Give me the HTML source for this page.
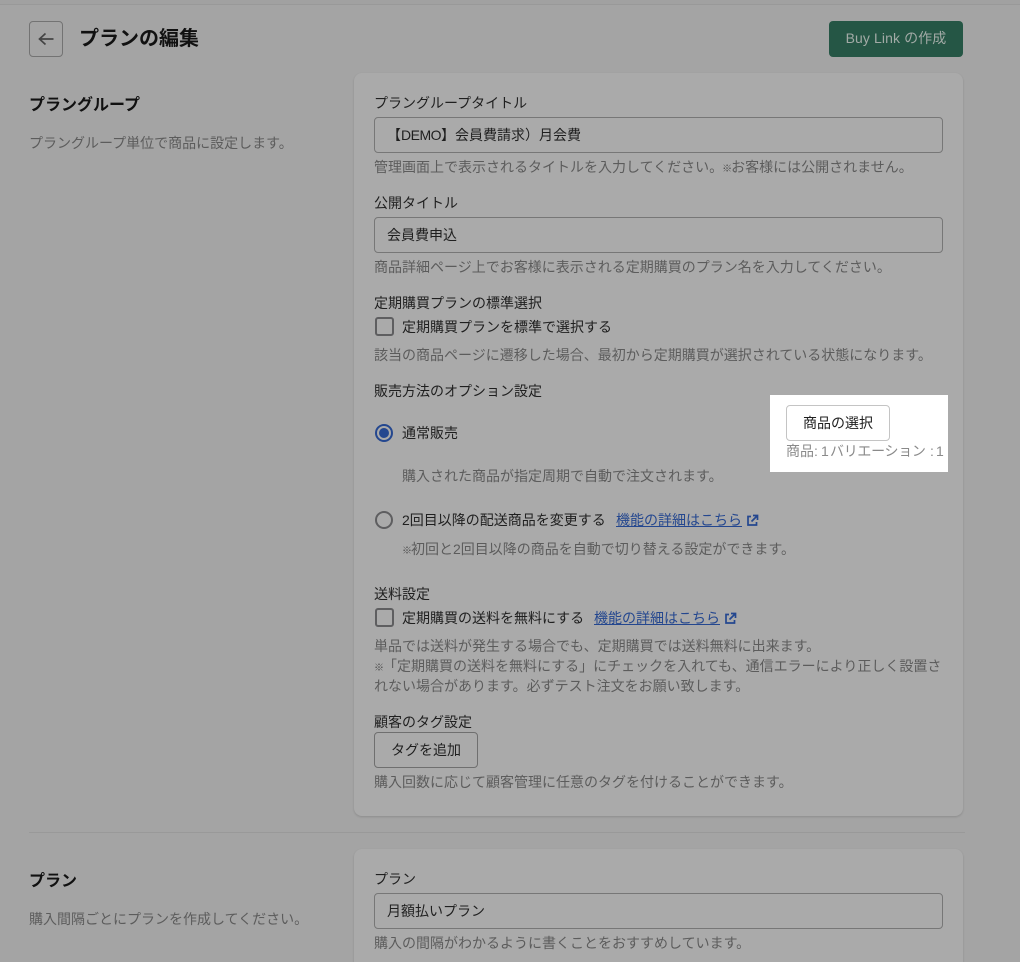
<!DOCTYPE html>
<html lang="ja"><head><meta charset="utf-8"><style>
html,body{margin:0;padding:0;width:1020px;height:962px;overflow:hidden}
body{background:#a4a4a4;font-family:"Liberation Sans","Noto Sans CJK JP",sans-serif;font-size:14px;color:#1c1c1c;text-spacing-trim:space-all}
#w{position:absolute;left:0;top:0;width:1020px;height:962px;overflow:hidden}
.t{position:absolute;white-space:nowrap;line-height:20px;height:20px}
.g{color:#5c5c5c}
.d{color:#1f1f1f}
.k{font-size:10px;letter-spacing:-1px;color:#4a4a4a}
.b{font-weight:700;font-size:16px;color:#111;line-height:24px;height:24px}
.card{position:absolute;left:354px;width:609px;background:#aaa;border-radius:8px;box-shadow:0 1px 2px rgba(0,0,0,.15)}
.inp{position:absolute;left:374px;width:567px;height:34px;border:1px solid #777;border-radius:4px}
.cb{position:absolute;left:375px;width:15px;height:15px;border:2px solid #5e5e60;border-radius:3px}
.rb{position:absolute;left:375px;width:14px;height:14px;border:2px solid #5e5e60;border-radius:50%}
a{color:#24478f;text-decoration:underline}
svg{position:absolute}
</style></head><body><div id="w">
<div style="position:absolute;left:0;top:0;width:1020px;height:4px;background:#a1a1a1;border-bottom:1px solid #999"></div>
<div style="position:absolute;left:29px;top:21px;width:32px;height:34px;border:1px solid #737373;border-radius:4px"></div>
<svg style="left:37px;top:30px" width="18" height="18" viewBox="0 0 18 18" fill="none" stroke="#444" stroke-width="1.7"><path d="M16.5 9H2.5M8.5 3.5L2.5 9l6 5.5"/></svg>
<div class="t" style="left:79px;top:25px;font-size:20px;font-weight:700;line-height:28px;height:28px;color:#111">プランの編集</div>
<div style="position:absolute;left:829px;top:21px;width:134px;height:35px;padding-bottom:1px;background:#255645;border-radius:4px;color:#a2aaa6;line-height:35px;text-align:center;letter-spacing:.1px">Buy Link の作成</div>
<div class="t b" style="left:29px;top:94px">プラングループ</div>
<div class="t g" style="left:29px;top:133px">プラングループ単位で商品に設定します。</div>
<div class="card" style="top:73px;height:743px"></div>
<div class="t d" style="left:374px;top:93px">プラングループタイトル</div>
<div class="inp" style="top:117px"></div>
<div class="t d" style="left:387px;top:125px">【<span style="letter-spacing:-.5px">DEMO</span>】会員費請求）月会費</div>
<div class="t g" style="left:374px;top:157px">管理画面上で表示されるタイトルを入力してください。<span class="k" style="margin-left:-1px">※</span>お客様には公開されません。</div>
<div class="t d" style="left:374px;top:193px">公開タイトル</div>
<div class="inp" style="top:217px"></div>
<div class="t d" style="left:387px;top:225px">会員費申込</div>
<div class="t g" style="left:374px;top:257px">商品詳細ページ上でお客様に表示される定期購買のプラン名を入力してください。</div>
<div class="t d" style="left:374px;top:293px">定期購買プランの標準選択</div>
<div class="cb" style="top:317px"></div>
<div class="t d" style="left:402px;top:317px">定期購買プランを標準で選択する</div>
<div class="t g" style="left:374px;top:345px">該当の商品ページに遷移した場合、最初から定期購買が選択されている状態になります。</div>
<div class="t d" style="left:374px;top:381px">販売方法のオプション設定</div>
<div class="rb" style="top:424px;border-color:#24478f"></div>
<div style="position:absolute;left:379px;top:428px;width:10px;height:10px;border-radius:50%;background:#24478f"></div>
<div class="t d" style="left:402px;top:423px">通常販売</div>
<div class="t g" style="left:402px;top:466px">購入された商品が指定周期で自動で注文されます。</div>
<div class="rb" style="top:511px"></div>
<div class="t d" style="left:402px;top:510px">2回目以降の配送商品を変更する</div>
<div class="t" style="left:616px;top:510px"><a>機能の詳細はこちら</a></div>
<svg style="left:746px;top:514px" width="13" height="13" viewBox="0 0 13 13" fill="none" stroke="#24478f" stroke-width="1.7"><path d="M5 2.5H2v8.5h8.5V8M7 1.5h4.5V6M11.5 1.5L5.5 7.5"/></svg>
<div class="t g" style="left:402px;top:539px"><span class="k">※</span>初回と2回目以降の商品を自動で切り替える設定ができます。</div>
<div class="t d" style="left:374px;top:584px">送料設定</div>
<div class="cb" style="top:608px"></div>
<div class="t d" style="left:402px;top:608px">定期購買の送料を無料にする</div>
<div class="t" style="left:594px;top:608px"><a>機能の詳細はこちら</a></div>
<svg style="left:724px;top:612px" width="13" height="13" viewBox="0 0 13 13" fill="none" stroke="#24478f" stroke-width="1.7"><path d="M5 2.5H2v8.5h8.5V8M7 1.5h4.5V6M11.5 1.5L5.5 7.5"/></svg>
<div class="t g" style="left:374px;top:636px">単品では送料が発生する場合でも、定期購買では送料無料に出来ます。</div>
<div class="t g" style="left:374px;top:656px"><span class="k">※</span>「定期購買の送料を無料にする」にチェックを入れても、通信エラーにより正しく設置さ</div>
<div class="t g" style="left:374px;top:676px">れない場合があります。必ずテスト注文をお願い致します。</div>
<div class="t d" style="left:374px;top:712px">顧客のタグ設定</div>
<div style="position:absolute;left:374px;top:732px;width:102px;height:34px;border:1px solid #6f6f6f;border-radius:4px;line-height:34px;text-align:center;color:#1f1f1f">タグを追加</div>
<div class="t g" style="left:374px;top:772px">購入回数に応じて顧客管理に任意のタグを付けることができます。</div>
<div style="position:absolute;left:770px;top:395px;width:178px;height:77px;background:#fff"></div>
<div style="position:absolute;left:786px;top:405px;width:102px;height:34px;border:1px solid #c4c4c4;border-radius:4px;line-height:34px;text-align:center;color:#202020;background:#fff">商品の選択</div>
<div class="t" style="left:786px;top:441px;color:#8a8a8a">商品:</div>
<div class="t" style="left:821px;top:441px;color:#8a8a8a">1</div>
<div class="t" style="left:830px;top:441px;color:#8a8a8a;letter-spacing:-.3px">バリエーション</div>
<div class="t" style="left:930px;top:441px;color:#8a8a8a">:</div>
<div class="t" style="left:936px;top:441px;color:#8a8a8a">1</div>
<div style="position:absolute;left:29px;top:832px;width:936px;height:1px;background:#999"></div>
<div class="t b" style="left:29px;top:870px">プラン</div>
<div class="t g" style="left:29px;top:909px">購入間隔ごとにプランを作成してください。</div>
<div class="card" style="top:849px;height:113px;border-radius:8px 8px 0 0"></div>
<div class="t d" style="left:374px;top:869px">プラン</div>
<div class="inp" style="top:893px"></div>
<div class="t d" style="left:387px;top:901px">月額払いプラン</div>
<div class="t g" style="left:374px;top:933px">購入の間隔がわかるように書くことをおすすめしています。</div>
</div></body></html>
